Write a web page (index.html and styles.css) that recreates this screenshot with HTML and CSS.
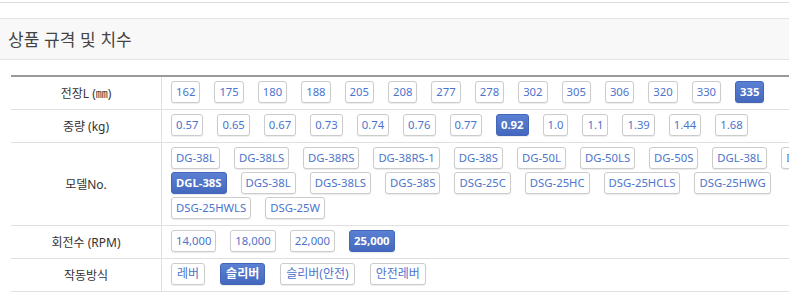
FILE: index.html
```html
<!DOCTYPE html>
<html lang="ko">
<head>
<meta charset="utf-8">
<title>상품 규격 및 치수</title>
<link rel="stylesheet" href="styles.css">
</head>
<body>
<div class="page">
  <div class="topline"></div>
  <h2 class="section-title">상품 규격 및 치수</h2>
  <table class="spec">
    <tr>
      <th>전장L (㎜)</th>
      <td><div class="opts">
        <span class="opt">162</span><span class="opt">175</span><span class="opt">180</span><span class="opt">188</span><span class="opt">205</span><span class="opt">208</span><span class="opt">277</span><span class="opt">278</span><span class="opt">302</span><span class="opt">305</span><span class="opt">306</span><span class="opt">320</span><span class="opt">330</span><span class="opt on">335</span>
      </div></td>
    </tr>
    <tr>
      <th>중량 (kg)</th>
      <td><div class="opts">
        <span class="opt">0.57</span><span class="opt">0.65</span><span class="opt">0.67</span><span class="opt">0.73</span><span class="opt">0.74</span><span class="opt">0.76</span><span class="opt">0.77</span><span class="opt on">0.92</span><span class="opt">1.0</span><span class="opt">1.1</span><span class="opt">1.39</span><span class="opt">1.44</span><span class="opt">1.68</span>
      </div></td>
    </tr>
    <tr>
      <th>모델No.</th>
      <td><div class="opts">
        <span class="opt">DG-38L</span><span class="opt">DG-38LS</span><span class="opt">DG-38RS</span><span class="opt">DG-38RS-1</span><span class="opt">DG-38S</span><span class="opt">DG-50L</span><span class="opt">DG-50LS</span><span class="opt">DG-50S</span><span class="opt">DGL-38L</span><span class="opt">DGL-38LS</span><span class="opt on">DGL-38S</span><span class="opt">DGS-38L</span><span class="opt">DGS-38LS</span><span class="opt">DGS-38S</span><span class="opt">DSG-25C</span><span class="opt">DSG-25HC</span><span class="opt">DSG-25HCLS</span><span class="opt">DSG-25HWG</span><span class="opt">DSG-25HWLS</span><span class="opt">DSG-25W</span>
      </div></td>
    </tr>
    <tr>
      <th>회전수 (RPM)</th>
      <td><div class="opts">
        <span class="opt">14,000</span><span class="opt">18,000</span><span class="opt">22,000</span><span class="opt on">25,000</span>
      </div></td>
    </tr>
    <tr>
      <th>작동방식</th>
      <td><div class="opts wide">
        <span class="opt ko">레버</span><span class="opt ko on">슬리버</span><span class="opt ko">슬리버(안전)</span><span class="opt ko">안전레버</span>
      </div></td>
    </tr>
  </table>
</div>
</body>
</html>
```

FILE: styles.css
```css
html, body {
  margin: 0;
  padding: 0;
  overflow: hidden;
  background: #fff;
}
body {
  font-family: "Noto Sans", "Noto Sans CJK KR", sans-serif;
  color: #333;
}
.page {
  width: 870px;
}
.topline {
  margin-top: 2px;
  border-top: 1px solid #dedede;
  height: 15px;
}
.section-title {
  margin: 0;
  height: 40px;
  line-height: 40px;
  padding-left: 8px;
  background: #f8f8f8;
  border-top: 1px solid #e4e4e4;
  border-bottom: 1px solid #e4e4e4;
  font-family: "Noto Sans CJK KR", sans-serif;
  font-size: 17px;
  font-weight: normal;
  color: #444;
}
.spec {
  margin: 15px 0 0 11px;
  width: 848px;
  border-collapse: collapse;
  border-top: 2px solid #999;
}
.spec th,
.spec td {
  border-bottom: 1px solid #e0e0e0;
  padding: 0;
}
.spec th {
  width: 150px;
  border-right: 1px solid #e0e0e0;
  font-family: "Noto Sans", "Noto Sans CJK KR", sans-serif;
  font-size: 12px;
  font-weight: normal;
  color: #333;
  text-align: center;
}
.spec td {
  padding: 4px 8px 6px 9px;
}
.opts {
  display: flex;
  flex-wrap: wrap;
  column-gap: 14px;
  row-gap: 3px;
}
.opts.wide {
  column-gap: 15px;
}
.opt {
  box-sizing: border-box;
  height: 22px;
  line-height: 20px;
  padding: 0 4px;
  border: 1px solid #cccccc;
  border-radius: 3px;
  background: #fff;
  box-shadow: 0 1px 1px rgba(0, 0, 0, 0.08);
  font-size: 11.3px;
  color: #4d74cc;
  white-space: nowrap;
}
.opt.ko {
  font-size: 12px;
  padding: 0 5px;
}
.opt.on {
  background: linear-gradient(#5a80d3, #4468bd);
  border-color: #4466b9;
  color: #fff;
  font-weight: bold;
}
```
